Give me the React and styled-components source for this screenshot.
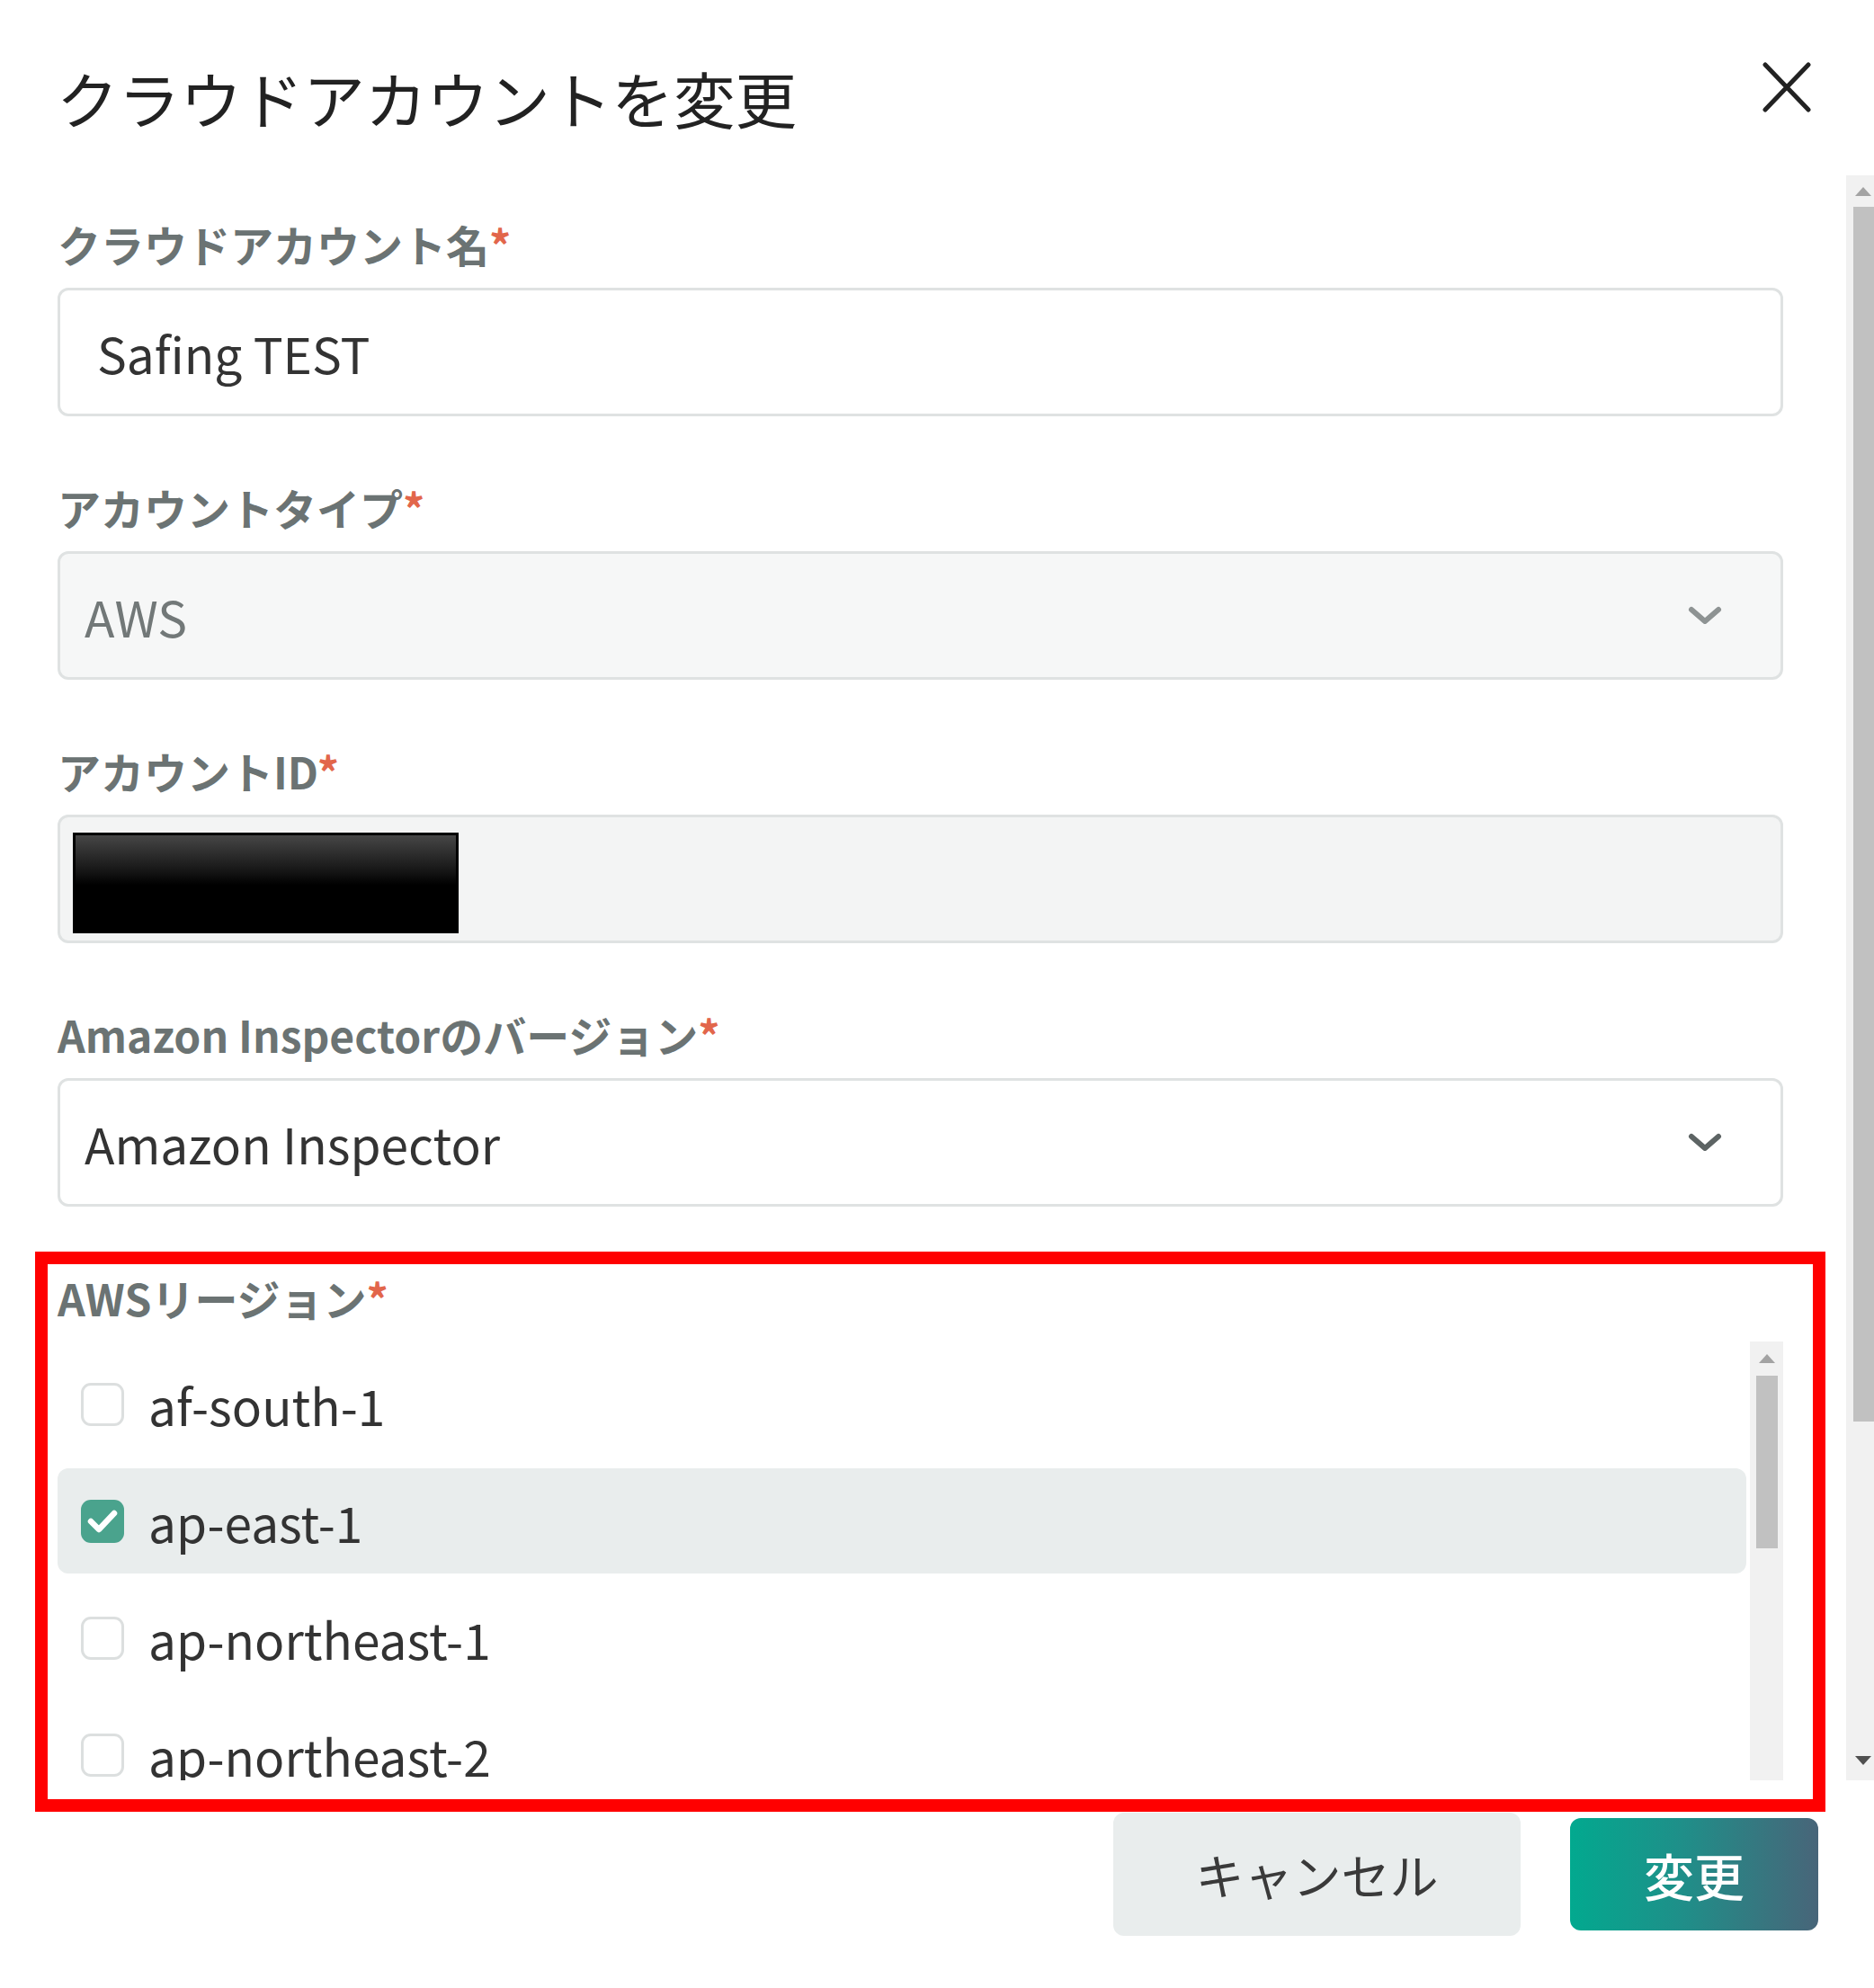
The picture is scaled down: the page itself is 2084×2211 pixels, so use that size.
import React from 'react';
import styled, { createGlobalStyle } from 'styled-components';

const GlobalStyle = createGlobalStyle`
  html, body {
    margin: 0;
    padding: 0;
    background: #fff;
  }
  body {
    font-family: "Noto Sans CJK JP", "Noto Sans", sans-serif;
    color: #333;
  }
  * {
    box-sizing: border-box;
  }
`;

const Dialog = styled.div`
  position: relative;
  width: 2084px;
  height: 2211px;
  display: flex;
  flex-direction: column;
  background: #fff;
  overflow: hidden;
`;

const Header = styled.header`
  height: 195px;
  flex-shrink: 0;
  display: flex;
  justify-content: space-between;
  align-items: flex-start;
  padding: 68px 70px 0 63px;
`;

const Title = styled.h1`
  margin: 0;
  font-size: 68.6px;
  line-height: 80px;
  font-weight: 400;
  color: #222;
`;

const CloseButton = styled.button`
  margin-top: 1px;
  width: 54px;
  height: 56px;
  padding: 0;
  border: 0;
  background: none;
  display: flex;
`;

const BodyRow = styled.div`
  height: 1785px;
  flex-shrink: 0;
  display: flex;
`;

const Body = styled.div`
  flex: 1;
  min-width: 0;
  overflow: hidden;
  padding: 46px 70px 0 64px;
`;

const Field = styled.div`
  margin-bottom: 71px;
`;

const Label = styled.div`
  font-size: 48px;
  line-height: 60px;
  font-weight: 700;
  color: #6b7373;
  margin-bottom: 19px;
  white-space: nowrap;
`;

const Required = styled.span`
  color: #e2664b;
`;

const Control = styled.div`
  height: 143px;
  display: flex;
  align-items: center;
  border: 3px solid #dfe2e2;
  border-radius: 12px;
  font-size: 55px;
  white-space: nowrap;
`;

const TextInput = styled(Control)`
  padding-left: 41px;
  background: #fff;
  color: #333;
`;

const SelectBox = styled(Control)`
  justify-content: space-between;
  padding: 0 64px 0 27px;
  background: ${(p) => (p.$disabled ? '#f6f7f7' : '#fff')};
  color: ${(p) => (p.$disabled ? '#727878' : '#333')};
`;

const ReadOnlyBox = styled(Control)`
  align-items: flex-start;
  background: #f3f4f4;
  padding: 17px 0 0 14px;
`;

const Redaction = styled.span`
  width: 429px;
  height: 112px;
  border: 3px solid #000;
  background: linear-gradient(#464646, #151515 38%, #000 52%);
`;

const RegionList = styled.div`
  height: 491px;
  display: flex;
  gap: 4px;
  overflow: hidden;
`;

const Rows = styled.div`
  flex: 1;
  display: flex;
  flex-direction: column;
  gap: 13px;
  padding-top: 11px;
`;

const Row = styled.label`
  height: 117px;
  flex-shrink: 0;
  display: flex;
  align-items: center;
  gap: 27px;
  padding-left: 26px;
  border-radius: 12px;
  background: ${(p) => (p.$checked ? '#e9eded' : 'transparent')};
  font-size: 55px;
  color: #333;
`;

const CheckBox = styled.span`
  width: 48px;
  height: 48px;
  flex-shrink: 0;
  border-radius: 11px;
  border: ${(p) => (p.$checked ? 'none' : '3px solid #dcdfdf')};
  background: ${(p) => (p.$checked ? '#4aa38d' : '#fff')};
  display: flex;
`;

const Track = styled.div`
  width: ${(p) => p.$w}px;
  flex-shrink: 0;
  background: #f1f1f1;
  display: flex;
  flex-direction: column;
`;

const ArrowCell = styled.div`
  height: ${(p) => p.$h}px;
  flex-shrink: 0;
  display: flex;
  align-items: center;
  padding-left: 10px;
`;

const Triangle = styled.span`
  width: 0;
  height: 0;
  border-left: 9px solid transparent;
  border-right: 9px solid transparent;
  ${(p) => (p.$down ? 'border-top' : 'border-bottom')}: 10px solid ${(p) => p.$color};
`;

const Thumb = styled.div`
  height: ${(p) => p.$h}px;
  width: ${(p) => p.$w};
  margin-left: ${(p) => p.$ml}px;
  flex-shrink: 0;
  background: #c1c1c1;
`;

const Spacer = styled.div`
  flex: 1;
`;

const Footer = styled.footer`
  flex: 1;
  display: flex;
  justify-content: flex-end;
  align-items: flex-start;
  padding: 36px 62px 0 0;
`;

const ButtonGroup = styled.div`
  display: flex;
  align-items: center;
  gap: 55px;
`;

const Button = styled.button`
  border: 0;
  border-radius: 12px;
  font-family: inherit;
  display: flex;
  align-items: center;
  justify-content: center;
  padding: 0;
`;

const CancelButton = styled(Button)`
  width: 453px;
  height: 137px;
  background: #e9eded;
  color: #3a3a3a;
  font-size: 54px;
  font-weight: 400;
`;

const SubmitButton = styled(Button)`
  width: 276px;
  height: 125px;
  background: linear-gradient(90deg, #02a98f 0%, #1f8f89 45%, #486579 100%);
  color: #fff;
  font-size: 56px;
  font-weight: 500;
`;

const Annotation = styled.div`
  position: absolute;
  left: 39px;
  top: 1392px;
  width: 1991px;
  height: 623px;
  border: 14px solid #ff0000;
  pointer-events: none;
`;

const Chevron = ({ color }) => (
  <svg width="40" height="24" viewBox="0 0 40 24">
    <path d="M5 5 L20 18 L35 5" fill="none" stroke={color} strokeWidth="6" strokeLinecap="round" strokeLinejoin="round" />
  </svg>
);

const CloseIcon = () => (
  <svg width="54" height="56" viewBox="0 0 54 56">
    <path d="M3 3 L51 53 M51 3 L3 53" stroke="#222" strokeWidth="5" strokeLinecap="round" />
  </svg>
);

const CheckMark = () => (
  <svg width="48" height="48" viewBox="0 0 48 48">
    <polyline points="11,24 20,33 37,15" fill="none" stroke="#fff" strokeWidth="6.5" strokeLinecap="round" strokeLinejoin="round" />
  </svg>
);

const regions = [
  { name: 'af-south-1', checked: false },
  { name: 'ap-east-1', checked: true },
  { name: 'ap-northeast-1', checked: false },
  { name: 'ap-northeast-2', checked: false },
];

const FieldLabel = ({ children }) => (
  <Label>
    {children}
    <Required>*</Required>
  </Label>
);

export default function App() {
  return (
    <Dialog>
      <GlobalStyle />
      <Header>
        <Title>クラウドアカウントを変更</Title>
        <CloseButton aria-label="close">
          <CloseIcon />
        </CloseButton>
      </Header>

      <BodyRow>
        <Body>
          <Field>
            <FieldLabel>クラウドアカウント名</FieldLabel>
            <TextInput>Safing TEST</TextInput>
          </Field>

          <Field>
            <FieldLabel>アカウントタイプ</FieldLabel>
            <SelectBox $disabled>
              AWS
              <Chevron color="#8e9393" />
            </SelectBox>
          </Field>

          <Field>
            <FieldLabel>アカウントID</FieldLabel>
            <ReadOnlyBox>
              <Redaction />
            </ReadOnlyBox>
          </Field>

          <Field>
            <FieldLabel>Amazon Inspectorのバージョン</FieldLabel>
            <SelectBox>
              Amazon Inspector
              <Chevron color="#5d6464" />
            </SelectBox>
          </Field>

          <Field>
            <FieldLabel>AWSリージョン</FieldLabel>
            <RegionList>
              <Rows>
                {regions.map((r) => (
                  <Row key={r.name} $checked={r.checked}>
                    <CheckBox $checked={r.checked}>{r.checked && <CheckMark />}</CheckBox>
                    {r.name}
                  </Row>
                ))}
              </Rows>
              <Track $w={37}>
                <ArrowCell $h={38}>
                  <Triangle $color="#a3a3a3" />
                </ArrowCell>
                <Thumb $h={192} $w="24px" $ml={7} />
              </Track>
            </RegionList>
          </Field>
        </Body>

        <Track $w={31}>
          <ArrowCell $h={35}>
            <Triangle $color="#a3a3a3" />
          </ArrowCell>
          <Thumb $h={1351} $w="auto" $ml={8} />
          <Spacer />
          <ArrowCell $h={44}>
            <Triangle $down $color="#505050" />
          </ArrowCell>
        </Track>
      </BodyRow>

      <Footer>
        <ButtonGroup>
          <CancelButton>キャンセル</CancelButton>
          <SubmitButton>変更</SubmitButton>
        </ButtonGroup>
      </Footer>

      <Annotation />
    </Dialog>
  );
}
